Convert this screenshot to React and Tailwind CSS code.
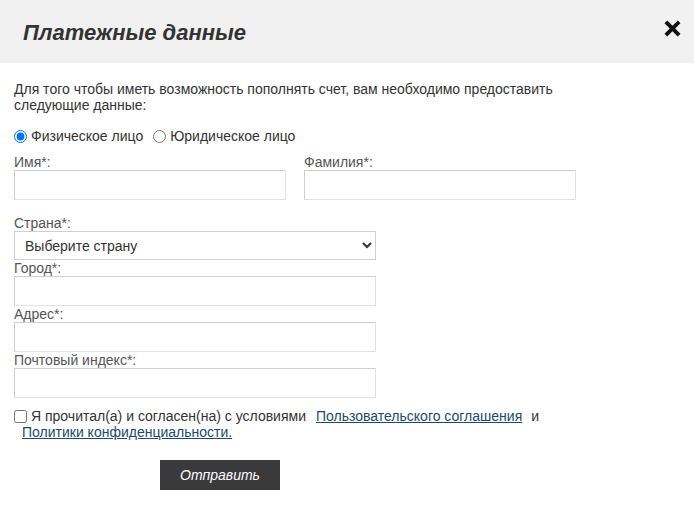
import React from 'react';

const inputClass = "block h-[30px] border border-[#cfcfcf] border-b-[#e2e2e2] border-r-[#e2e2e2] bg-white px-2 text-[14px] outline-none";

function Field({ label, width = "w-[362px]" }) {
    return (
        <div>
            <label className="block text-[14px] leading-[16px] text-[#555]">{label}</label>
            <input type="text" className={inputClass + " " + width}/>
        </div>
    )
}

export default function App() {
    return (
        <div className="w-[694px] h-[525px] bg-white text-[#333]" style={{fontFamily: '"Liberation Sans", Arial, sans-serif'}}>
            {/* Header */}
            <div className="h-[63px] bg-[#f1f1f1] flex items-center justify-between pl-[23px] pr-[13px]">
                <h2 className="text-[22px] font-bold italic text-[#333] pt-[1px]">Платежные данные</h2>
                <svg width="17" height="17" viewBox="0 0 16 16" className="mb-[6px]">
                    <path d="M3 3 L13 13 M13 3 L3 13" stroke="#111" strokeWidth="3.6" strokeLinecap="square"/>
                </svg>
            </div>

            {/* Body */}
            <div className="px-[14px] pt-[18px]">
                <p className="text-[14px] leading-[16px] text-[#333] w-[560px]">
                    Для того чтобы иметь возможность пополнять счет, вам необходимо предоставить следующие данные:
                </p>

                <div className="flex items-center mt-[13px] text-[14px] text-[#333]">
                    <label className="flex items-center">
                        <input type="radio" name="type" defaultChecked className="m-0 w-[13px] h-[13px]"/>
                        <span className="ml-[4px]">Физическое лицо</span>
                    </label>
                    <label className="flex items-center ml-[10px]">
                        <input type="radio" name="type" className="m-0 w-[13px] h-[13px]"/>
                        <span className="ml-[4px]">Юридическое лицо</span>
                    </label>
                </div>

                <div className="flex gap-[18px] mt-[7px]">
                    <Field label="Имя*:" width="w-[272px]"/>
                    <Field label="Фамилия*:" width="w-[272px]"/>
                </div>

                <div className="mt-[15px]">
                    <label className="block text-[14px] leading-[16px] text-[#555]">Страна*:</label>
                    <select className="block w-[362px] h-[29px] border border-[#cfcfcf] bg-white pl-[6px] text-[14px] text-[#333] outline-none">
                        <option>Выберите страну</option>
                    </select>
                </div>

                <div className="flex flex-col mt-[0px]">
                    <Field label="Город*:"/>
                    <Field label="Адрес*:"/>
                    <Field label="Почтовый индекс*:"/>
                </div>

                <div className="mt-[10px] text-[14px] leading-[16px] text-[#333]">
                    <label className="flex items-center">
                        <input type="checkbox" className="m-0 w-[13px] h-[13px]"/>
                        <span className="ml-[4px]">Я прочитал(а) и согласен(на) с условиями</span>
                        <a href="#" className="ml-[10px] text-[#1d4a6b] underline">Пользовательского соглашения</a>
                        <span className="ml-[9px]">и</span>
                    </label>
                    <a href="#" className="block ml-[8px] text-[#1d4a6b] underline w-fit">Политики конфиденциальности.</a>
                </div>

                <button type="button" className="block ml-[146px] mt-[20px] w-[120px] h-[30px] bg-[#3a393c] text-white text-[14px] italic">
                    Отправить
                </button>
            </div>
        </div>
    )
}
